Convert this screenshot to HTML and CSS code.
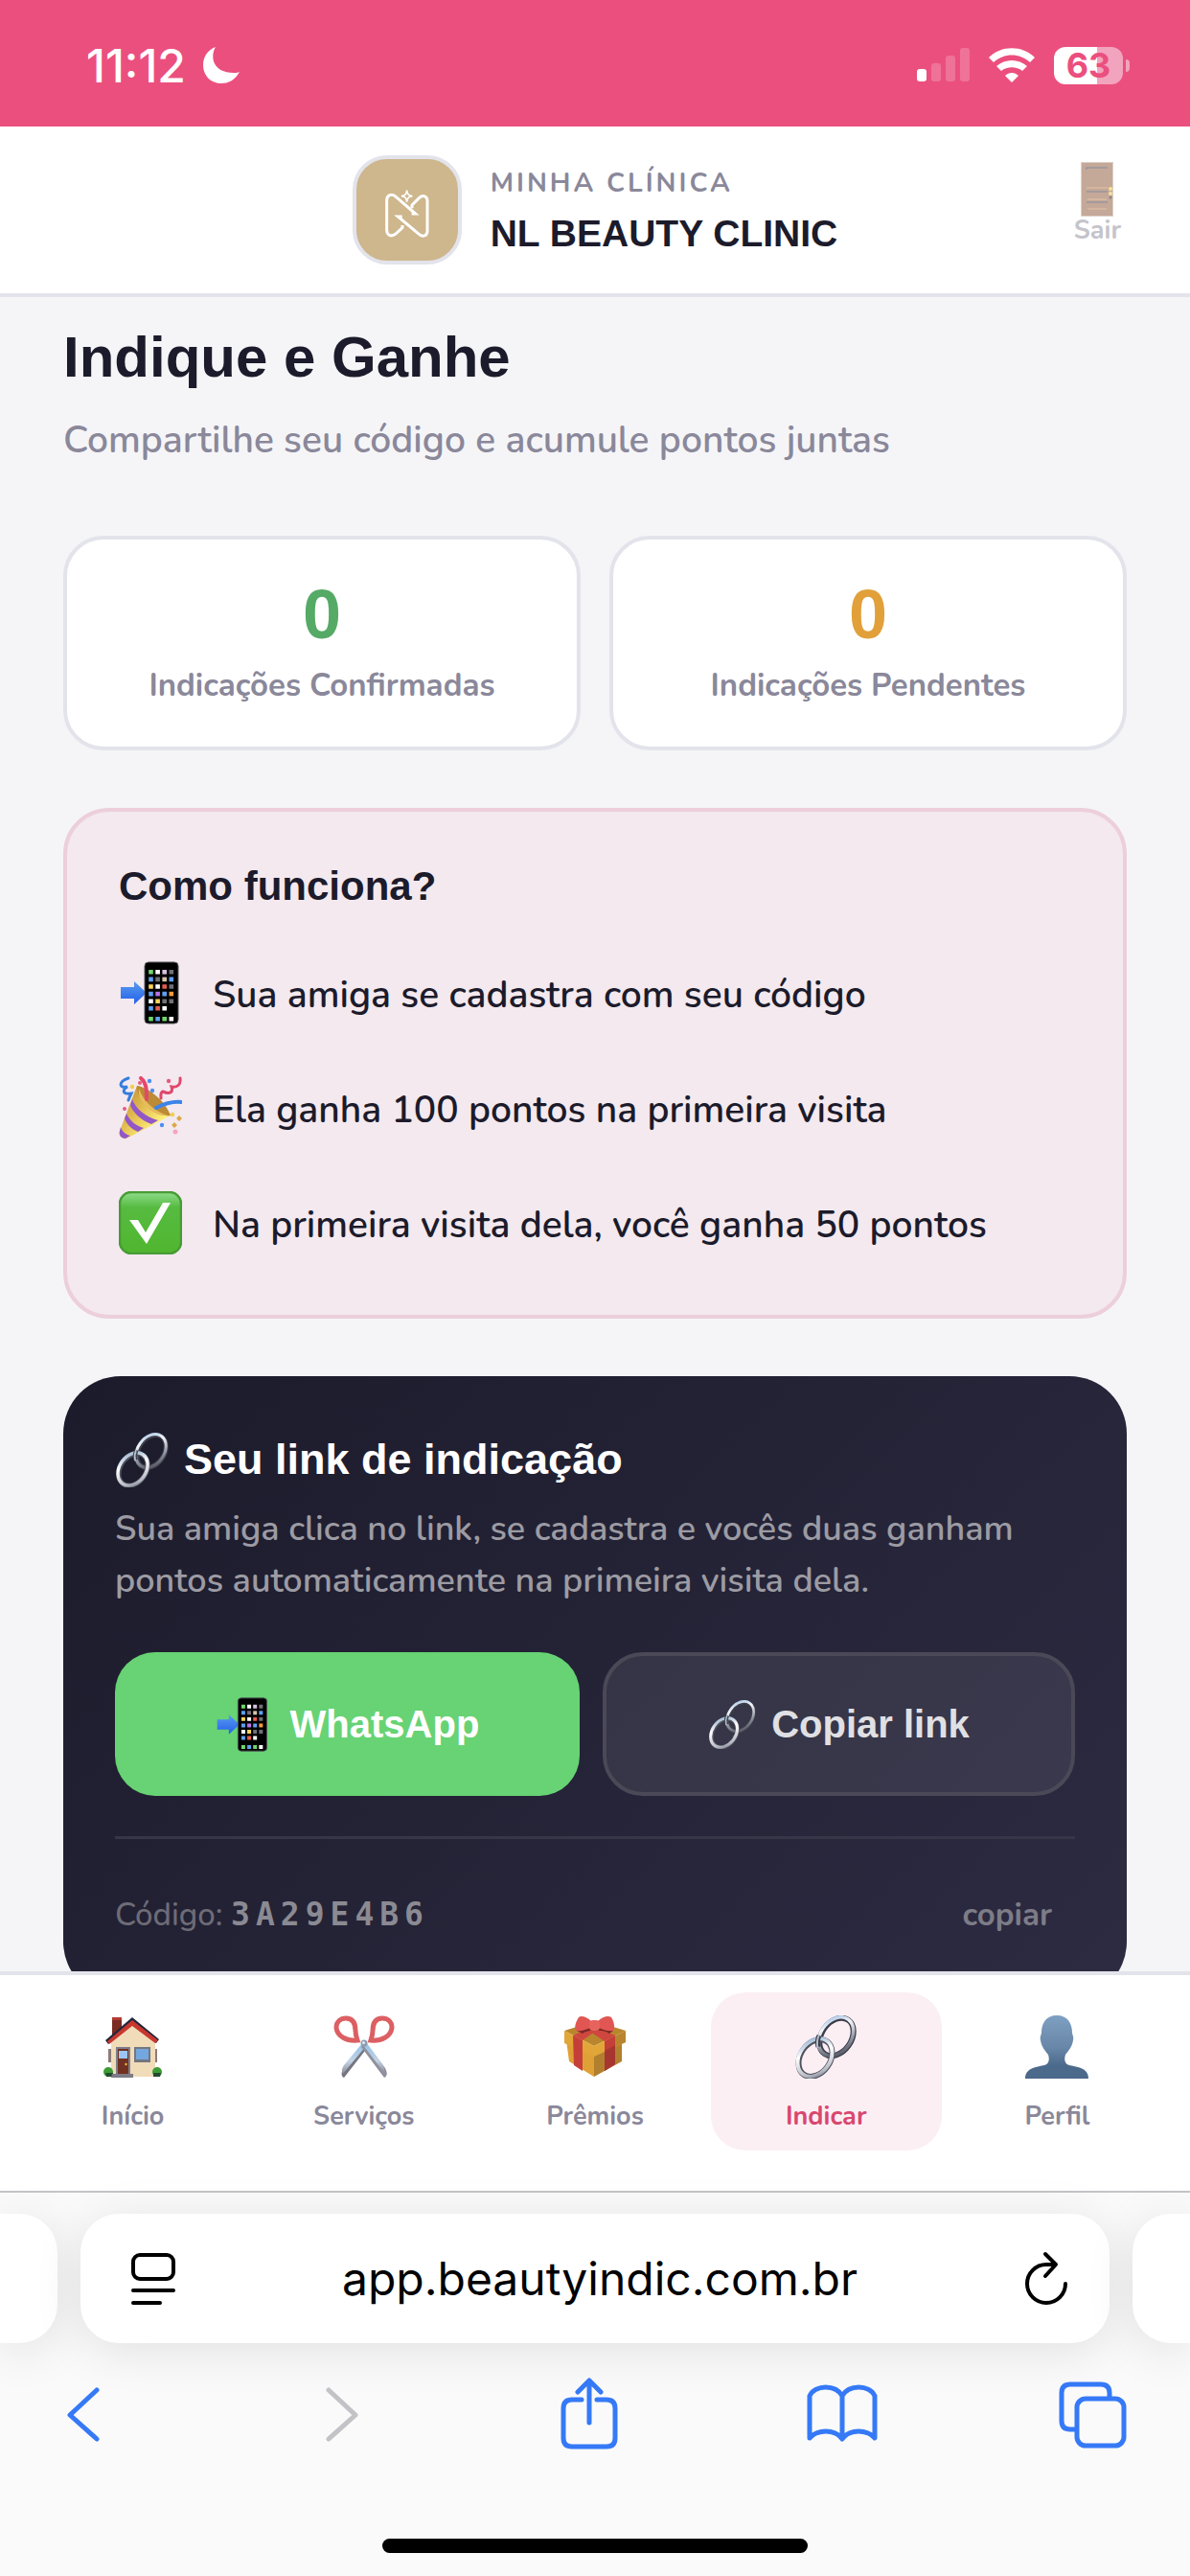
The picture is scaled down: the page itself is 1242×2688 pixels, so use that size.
FILE: index.html
```html
<!DOCTYPE html>
<html lang="pt-BR">
<head>
    <meta charset="UTF-8">
    <meta name="viewport" content="width=device-width, initial-scale=1.0">
    <title>Indique e Ganhe</title>
    <link rel="stylesheet" href="styles.css">
</head>
<body>

<!-- Shared icons -->
<svg class="sprite" aria-hidden="true">
    <defs>
        <linearGradient id="arrowBlue" x1="0" y1="0" x2="0" y2="1">
            <stop offset="0" stop-color="#5a9bf0"/><stop offset="1" stop-color="#2360e8"/>
        </linearGradient>
        <linearGradient id="steel" x1="0" y1="0" x2="1" y2="1">
            <stop offset="0" stop-color="#8fb4dc"/><stop offset="0.3" stop-color="#f4f6fa"/><stop offset="0.65" stop-color="#8d929f"/><stop offset="1" stop-color="#3d3f4a"/>
        </linearGradient>
        <linearGradient id="steelLight" x1="0" y1="0" x2="1" y2="1">
            <stop offset="0" stop-color="#7d9fc4"/><stop offset="0.4" stop-color="#ffffff"/><stop offset="0.8" stop-color="#b8bcc6"/><stop offset="1" stop-color="#5a5d68"/>
        </linearGradient>
        <linearGradient id="cone" x1="0" y1="0" x2="1" y2="1">
            <stop offset="0" stop-color="#b8862f"/><stop offset="0.4" stop-color="#e0b84e"/><stop offset="0.75" stop-color="#fff27a"/><stop offset="1" stop-color="#c79a3c"/>
        </linearGradient>
        <linearGradient id="tick" x1="0" y1="0" x2="0" y2="1">
            <stop offset="0" stop-color="#8fdc8c"/><stop offset="0.25" stop-color="#56bb40"/><stop offset="1" stop-color="#50b62f"/>
        </linearGradient>
        <linearGradient id="bust" x1="0" y1="0" x2="0" y2="1">
            <stop offset="0" stop-color="#7fa0c2"/><stop offset="0.5" stop-color="#6987a8"/><stop offset="0.8" stop-color="#4b698b"/><stop offset="1" stop-color="#4b698b"/>
        </linearGradient>
        <linearGradient id="blade" x1="0" y1="0" x2="0" y2="1">
            <stop offset="0" stop-color="#8ec0ea"/><stop offset="0.6" stop-color="#c3d3e4"/><stop offset="1" stop-color="#8d8e98"/>
        </linearGradient>
    </defs>

    <symbol id="i-phone" viewBox="0 0 66 66">
        <path d="M2 27h14v-6l13 12-13 12v-6H2z" fill="url(#arrowBlue)"/>
        <rect x="27" y="1" width="35" height="64" rx="4" fill="#000" stroke="#55565e" stroke-width="1"/>
        <g stroke-width="4.6" fill="none">
            <path d="M33.500 9v4.600M33.500 58v4.600M47.700 58v4.600" stroke="#6fd66b"/>
            <path d="M40.600 9v4.600M33.500 39.400v4.600M40.600 24.200v4.600M47.700 47v4.600M54.800 58v4.600" stroke="#fff"/>
            <path d="M47.700 9v4.600" stroke="#d9c0e0"/>
            <path d="M33.500 16.600v4.600M54.800 16.600v4.600M33.500 31.800v4.600M47.700 31.800v4.600M33.500 47v4.600M40.600 58v4.600" stroke="#5f9ff2"/>
            <path d="M47.700 16.600v4.600" stroke="#d8c3a8"/>
            <path d="M33.500 24.200v4.600M40.600 39.400v4.600" stroke="#ffd45a"/>
            <path d="M47.700 24.200v4.600M40.600 47v4.600" stroke="#e85b50"/>
            <path d="M40.600 31.800v4.600" stroke="#b873ea"/>
            <path d="M54.800 31.800v4.600" stroke="#f59b3a"/>
            <path d="M54.800 9v4.600M40.600 16.600v4.600M54.800 24.200v4.600M47.700 39.400v4.600M54.800 39.400v4.600" stroke="#6f7078"/>
        </g>
    </symbol>

    <symbol id="i-link" viewBox="0 0 66 66">
        <g fill="none">
            <ellipse cx="44" cy="22.500" rx="15.500" ry="21.500" transform="rotate(35 44 22.500)" stroke="#3c3e49" stroke-width="6"/>
            <ellipse cx="43.500" cy="22" rx="16" ry="22" transform="rotate(35 43.500 22)" stroke="url(#steel)" stroke-width="3.500"/>
            <ellipse cx="22" cy="44.500" rx="15.500" ry="21" transform="rotate(35 22 44.500)" stroke="#50535f" stroke-width="6"/>
            <ellipse cx="21.500" cy="44" rx="16" ry="21.500" transform="rotate(35 21.500 44)" stroke="url(#steelLight)" stroke-width="4"/>
            <path d="M25 33c-1-4-1-8 1-12" stroke="#3c3e49" stroke-width="5"/>
            <path d="M24.500 34c-1-4-1-8 1-13" stroke="#b5bfcd" stroke-width="2"/>
        </g>
    </symbol>

    <symbol id="i-party" viewBox="0 0 66 66">
        <path d="M19 10C30 13 47 26 54 41L8 65c-6 1-9-4-7-8z" fill="url(#cone)"/>
        <path d="M19 10c11 1 30 16 35 31-9 2-21-5-28-14-5-6-8-12-7-17z" fill="#bd8a35"/>
        <path d="M21 13c5 14 16 23 30 28-10 1-19-5-25-12-4-5-6-11-5-16z" fill="#e6bd5c"/>
        <path d="M14 24c3 9 14 19 27 22l-7 4C23 46 14 37 12 30zM8 39c3 7 10 13 18 15l-6 4C13 55 8 50 6 44zM2 53c1 4 5 8 10 9l-5 3c-5 0-7-4-6-8z" fill="#9257c8"/>
        <g fill="none" stroke-width="3.500" stroke-linecap="round">
            <path d="M23 2c6 5 6 12 6 22" stroke="#e6486c" stroke-width="4"/>
            <path d="M65 27c-10-1-18 2-26 6" stroke="#3d84e8" stroke-width="4"/>
            <path d="M10 2C-1 6 0 13 9 11 3 15 4 19 13 18c-1 2-2 4-3 7" stroke="#377ddd" stroke-width="3"/>
            <path d="M64 2c1 7-3 10-9 9 2 6-2 8-9 5-3 1-2 4-2 7" stroke="#e0486c" stroke-width="3"/>
        </g>
        <g fill="#4b8ff0"><circle cx="32" cy="5" r="2.200"/><circle cx="35" cy="15" r="2.200"/><circle cx="45" cy="51" r="2.200"/></g>
        <g fill="#f3cd4c"><circle cx="14" cy="11" r="2.200"/><circle cx="56" cy="40" r="2.200"/><path d="M63 41l3 3-3 3-3-3zM58 48l3 3-3 3-3-3z" fill="#dba748"/></g>
        <g fill="#e75a80"><circle cx="52" cy="5" r="2.200"/><circle cx="6" cy="34" r="2"/><circle cx="22" cy="7" r="2"/><circle cx="59" cy="58" r="2.500" fill="#f4a4c4"/></g>
    </symbol>

    <symbol id="i-check" viewBox="0 0 66 66">
        <rect x="1" y="1" width="64" height="64" rx="12" fill="url(#tick)" stroke="#489b35" stroke-width="2.500"/>
        <path d="M11 30h9l8 13 18-31h8L29 55z" fill="#fff"/>
    </symbol>

    <symbol id="i-house" viewBox="0 0 66 66">
        <g transform="translate(3 0)">
            <path d="M8 2h10v14L8 25z" fill="#7a2c22"/><path d="M8 2h10v3H8z" fill="#b33a31"/>
            <path d="M4 35h3v14H4zM52 35h3v14h-3z" fill="#8c7b78"/>
            <path d="M7 27L29 7l24 21v36H7z" fill="#f0dcb9"/>
            <path d="M29 2L1 26l3 4L29 9l25 20 3-4z" fill="#22263a"/>
            <path d="M29 5L3 27l2 3L29 11l24 18 3-3z" fill="#c8382f"/>
            <circle cx="4" cy="59" r="5" fill="#3c9c35"/><circle cx="55" cy="59" r="5" fill="#3c9c35"/>
            <path d="M1 60h8v4H2zM51 60h8l-1 4h-7z" fill="#244b31"/>
            <path d="M12 33h15v28H12z" fill="#7e7e8a"/><path d="M14 35h11v26H14z" fill="#713122"/>
            <path d="M15 37h9v8h-9z" fill="#9cc6f2"/><circle cx="22.500" cy="51" r="1.200" fill="#f1b94c"/>
            <path d="M31 33h17v16H31z" fill="#74767f"/><path d="M33 35h13v11H33z" fill="#73a7e0"/>
            <path d="M8 61h22v4H7z" fill="#7d7b86"/>
        </g>
    </symbol>

    <symbol id="i-scissors" viewBox="0 0 66 66">
        <path d="M33 28l4 5L12 65c-3-1-3-5-1-9z" fill="#74757f"/>
        <path d="M32 28l3 4L11 61c-2-3-1-6 1-9z" fill="url(#blade)"/>
        <path d="M34 28l-4 5 24 32c4-2 3-6 1-10z" fill="#8f919d"/>
        <path d="M35 28l-3 3 22 29c1-4 0-7-4-12z" fill="url(#blade)"/>
        <g fill="none" stroke="#dc5f63" stroke-width="5">
            <path d="M26 26C15 27 5 22 4 13 4 6 9 3 14 3c9 0 10 8 10 13 0 4 1 7 2 10z"/>
            <path d="M40 26c11 1 21-4 22-13 0-7-5-10-10-10-9 0-10 8-10 13 0 4-1 7-2 10z"/>
        </g>
        <circle cx="33" cy="29" r="3.500" fill="#8d9cb0"/><circle cx="32.500" cy="28.500" r="1.500" fill="#e4ebf3"/>
    </symbol>

    <symbol id="i-gift" viewBox="0 0 66 66">
        <path d="M3 26l29 14v24L6 48z" fill="#dfa136"/><path d="M32 40l29-17v25L32 64z" fill="#b27f2e"/>
        <path d="M1 16L33 6l32 10-33 16z" fill="#b9862e"/>
        <path d="M1 16l31 16v11L1 29zM32 32l33-16v12L32 43z" fill="#e2a638"/><path d="M45 26l20-10v12L45 37z" fill="#b8842f"/>
        <path d="M10 21l10 5v32l-9-6zM43 27l11-6v30l-11 7z" fill="#c53f39"/><path d="M43 37l11-6v20l-11 7z" fill="#a73630"/>
        <path d="M10 21l18-8 9 1-17 12zM43 27L28 17l7-4 19 8z" fill="#cf463f"/>
        <path d="M14 16c8-7 30-7 38 0l-4 3c-8-5-24-4-28 0z" fill="#7b2725"/>
        <path d="M29 6C24 1 18 0 16 2c-3 5-5 10-3 14 5 1 11-1 17-4z" fill="#e15652"/>
        <path d="M36 6c5-5 11-6 14-4 3 5 4 10 2 14-6 1-11-1-17-4z" fill="#e15652"/>
        <rect x="27" y="5" width="11" height="11" rx="4" fill="#e7635e"/>
    </symbol>

    <symbol id="i-person" viewBox="0 0 66 66">
        <path d="M33 0c11 0 16 8 16 18 0 2 2 4 1 8-1 7-5 11-8 15-1 3-1 6 0 8 2 4 7 3 13 5 7 2 11 5 11 12H0c0-7 4-10 11-12 6-2 11-1 13-5 1-2 1-5 0-8-3-4-7-8-8-15-1-4 1-6 1-8C17 8 22 0 33 0z" fill="url(#bust)"/>
    </symbol>
</svg>

<div class="app">

    <div class="status-bar">
        <div class="status-left">
            <span>11:12</span>
            <svg width="38" height="38" viewBox="0 0 38 38"><path d="M13 0C7 10 10 27 32 27c2 0 4 0 6-1C33 35 26 38 19 38 8 38 0 30 0 19 0 10 5 3 13 0z" fill="#fff"/></svg>
        </div>
        <div class="status-right">
            <svg width="55" height="36" viewBox="0 0 55 36" fill="#fff">
                <rect x="0" y="22" width="10" height="13" rx="3"/>
                <g opacity="0.200"><rect x="15" y="16" width="10" height="19" rx="3"/><rect x="30" y="8" width="10" height="27" rx="3"/><rect x="45" y="0" width="10" height="35" rx="3"/></g>
            </svg>
            <svg width="48" height="36" viewBox="0 0 48 36" fill="#fff">
                <path d="M0 10C13-3 35-3 48 10l-5 5C32 5 16 5 5 15z"/>
                <path d="M8 19c9-8 23-8 32 0l-5 5c-6-5-16-5-22 0z"/>
                <path d="M24 36l-7-7c4-4 10-4 14 0z"/>
            </svg>
            <div class="battery"><span>63</span></div>
        </div>
    </div>

    <header class="header">
        <div class="clinic">
            <svg class="clinic-logo" viewBox="0 -9 318 318" fill="none" stroke="#fff" stroke-width="9">
                <path d="M144 198v8l-22 20c-14 10-27 2-27-12v-94c0-17 16-21 26-13l64 55h-12"/>
                <path d="M174 145v-10l22-22c13-12 26-5 26 9v94c0 16-14 20-26 10l-66-55h13"/>
                <path d="M158 89c2 13 5 16 17 18-12 2-15 5-17 18-2-13-5-16-17-18 12-2 15-5 17-18z" stroke-width="5"/>
            </svg>
            <div>
                <div class="clinic-label">MINHA CLÍNICA</div>
                <div class="clinic-name">NL BEAUTY CLINIC</div>
            </div>
        </div>
        <button class="logout" type="button">
            <svg width="34" height="57" viewBox="0 0 34 57">
                <rect x="0.500" y="0.500" width="33" height="56" fill="#c4a898" stroke="#ddd0c9"/>
                <path d="M6 8V6h22M6 31h22M6 42h22" fill="none" stroke="#9b959f" stroke-width="1.500"/>
                <path d="M6 27h22M7 39h20M7 49h20" fill="none" stroke="#d9bba3" stroke-width="1.500"/>
                <circle cx="31" cy="28" r="2" fill="#f6e58f"/><circle cx="31" cy="33" r="2" fill="#f3e2a0"/><circle cx="31" cy="37" r="1.500" fill="#8f8585"/>
            </svg>
            Sair
        </button>
    </header>

    <main class="content">
        <h1>Indique e Ganhe</h1>
        <p class="subtitle">Compartilhe seu código e acumule pontos juntas</p>

        <div class="stats">
            <div class="stat">
                <div class="stat-value green">0</div>
                <div class="stat-label">Indicações Confirmadas</div>
            </div>
            <div class="stat">
                <div class="stat-value orange">0</div>
                <div class="stat-label">Indicações Pendentes</div>
            </div>
        </div>

        <section class="how">
            <h2>Como funciona?</h2>
            <ul>
                <li><svg class="emoji"><use href="#i-phone"/></svg>Sua amiga se cadastra com seu código</li>
                <li><svg class="emoji"><use href="#i-party"/></svg>Ela ganha 100 pontos na primeira visita</li>
                <li><svg class="emoji"><use href="#i-check"/></svg>Na primeira visita dela, você ganha 50 pontos</li>
            </ul>
        </section>

        <section class="share">
            <h2><svg class="emoji-md"><use href="#i-link"/></svg>Seu link de indicação</h2>
            <p>Sua amiga clica no link, se cadastra e vocês duas ganham pontos automaticamente na primeira visita dela.</p>
            <div class="share-buttons">
                <button class="btn-whatsapp" type="button"><svg class="emoji-md"><use href="#i-phone"/></svg>WhatsApp</button>
                <button class="btn-copy" type="button"><svg class="emoji-sm"><use href="#i-link"/></svg>Copiar link</button>
            </div>
            <div class="code-row">
                <span>Código: <strong>3A29E4B6</strong></span>
                <button type="button">copiar</button>
            </div>
        </section>
    </main>

    <nav class="bottom-nav">
        <a href="#inicio"><svg class="emoji"><use href="#i-house"/></svg>Início</a>
        <a href="#servicos"><svg class="emoji"><use href="#i-scissors"/></svg>Serviços</a>
        <a href="#premios"><svg class="emoji"><use href="#i-gift"/></svg>Prêmios</a>
        <a href="#indicar" class="active"><svg class="emoji"><use href="#i-link"/></svg>Indicar</a>
        <a href="#perfil"><svg class="emoji"><use href="#i-person"/></svg>Perfil</a>
    </nav>

    <footer class="browser">
        <div class="tabs">
            <div class="tab-side left"></div>
            <div class="address">
                <button type="button" aria-label="Página">
                    <svg width="46" height="56" viewBox="0 0 46 56" fill="none" stroke="#000" stroke-width="4" stroke-linecap="round"><rect x="2" y="3" width="42" height="25" rx="7"/><path d="M2 40h42M2 53h28"/></svg>
                </button>
                <input type="text" value="app.beautyindic.com.br" aria-label="Endereço">
                <button type="button" aria-label="Recarregar">
                    <svg width="46" height="56" viewBox="0 0 46 56" fill="none" stroke="#000" stroke-width="4" stroke-linecap="round" stroke-linejoin="round"><path d="M43 33a20 20 0 1 1-20-20h9M22 2l11 11-11 12"/></svg>
                </button>
            </div>
            <div class="tab-side right"></div>
        </div>
        <div class="toolbar">
            <button type="button" aria-label="Voltar"><svg viewBox="0 0 72 72"><path d="M51 11L23 37l28 25"/></svg></button>
            <button type="button" aria-label="Avançar" disabled><svg viewBox="0 0 72 72"><path d="M29 11l28 26-28 25"/></svg></button>
            <button type="button" aria-label="Compartilhar"><svg viewBox="0 0 72 72"><path d="M30 21H20q-9 0-9 9v31q0 9 9 9h36q9 0 9-9V30q0-9-9-9H46M38 45V2M26 13L38 1l12 12"/></svg></button>
            <button type="button" aria-label="Favoritos"><svg viewBox="0 0 72 72"><path d="M38 17C31 5 10 5 4 17v44c8-9 26-10 34 1 8-11 26-10 34-1V17C66 5 45 5 38 17zv44"/></svg></button>
            <button type="button" aria-label="Abas"><svg viewBox="0 0 72 72"><path d="M18 52h-5q-9 0-9-9V14q0-9 9-9h32q9 0 9 9v5"/><rect x="20" y="20" width="49" height="49" rx="9"/></svg></button>
        </div>
        <div class="home-bar"></div>
    </footer>

</div>

</body>
</html>
```
FILE: styles.css
```css
* {
    box-sizing: border-box;
}

body {
    margin: 0;
    font-family: Nunito, Lato, sans-serif;
    background-color: #f5f5f8;
    color: #1c1b2b;
}

h1, h2, p, ul {
    margin: 0;
    padding: 0;
}

h1, h2, .clinic-name, .stat-value, .share-buttons button {
    font-family: "Liberation Sans", Arial, sans-serif;
    font-weight: bold;
}

button {
    border: none;
    background: none;
    padding: 0;
    font-family: inherit;
    cursor: pointer;
}

svg {
    display: block;
    flex: none;
    overflow: visible;
}

.sprite {
    position: absolute;
    width: 0;
    height: 0;
}

.emoji {
    width: 66px;
    height: 66px;
}

.emoji-md {
    width: 57px;
    height: 57px;
}

.emoji-sm {
    width: 51px;
    height: 51px;
}

.app {
    display: flex;
    flex-direction: column;
    height: 100vh;
}

/* Status bar */
.status-bar {
    display: flex;
    justify-content: space-between;
    align-items: center;
    height: 132px;
    padding: 4px 70px 0 90px;
    background-color: #eb4f7e;
    color: #fff;
    font-family: Inter, sans-serif;
    flex: none;
}

.status-left, .status-right {
    display: flex;
    align-items: center;
    gap: 18px;
}

.status-left {
    font-size: 48px;
    font-weight: 500;
}

.status-right {
    gap: 20px;
}

.battery {
    position: relative;
    width: 72px;
    height: 39px;
    border-radius: 12px;
    background: linear-gradient(to right, #fff 63%, #f2a3bd 63%);
    color: #eb4f7e;
    font-size: 36px;
    font-weight: 700;
    line-height: 39px;
    text-align: center;
}

.battery::after {
    content: "";
    position: absolute;
    right: -7px;
    top: 13px;
    width: 4px;
    height: 13px;
    border-radius: 0 4px 4px 0;
    background-color: #f2a3bd;
}

/* Header */
.header {
    position: relative;
    display: flex;
    justify-content: center;
    padding: 30px 66px;
    background-color: #fff;
    border-bottom: 4px solid #e3e3eb;
    flex: none;
}

.clinic {
    display: flex;
    align-items: center;
    gap: 30px;
}

.clinic-logo {
    width: 114px;
    height: 114px;
    border: 4px solid #e3e3eb;
    border-radius: 36px;
    background-color: #ceb68d;
}

.clinic-label {
    font-size: 28px;
    font-weight: 700;
    line-height: 48px;
    letter-spacing: 3px;
    color: #8a889a;
}

.clinic-name {
    font-size: 39px;
    line-height: 57px;
}

.logout {
    position: absolute;
    right: 72px;
    top: 37px;
    display: flex;
    flex-direction: column;
    align-items: center;
    color: #c4c4cb;
    font-size: 27px;
    font-weight: 700;
    line-height: 30px;
}

/* Content */
.content {
    flex: 1;
    min-height: 0;
    overflow: hidden;
    padding: 27px 66px 0;
}

h1 {
    font-size: 60px;
    line-height: 72px;
}

.subtitle {
    margin-top: 21px;
    font-size: 39px;
    font-weight: 600;
    line-height: 60px;
    color: #8a889a;
}

.stats {
    display: flex;
    gap: 30px;
    margin-top: 69px;
}

.stat {
    flex: 1;
    padding: 36px 0 39px;
    background-color: #fff;
    border: 4px solid #e3e3eb;
    border-radius: 42px;
    text-align: center;
}

.stat-value {
    font-size: 72px;
    line-height: 84px;
}

.green {
    color: #55aa66;
}

.orange {
    color: #e1a03a;
}

.stat-label {
    margin-top: 9px;
    font-size: 33px;
    font-weight: 700;
    line-height: 48px;
    color: #8a889a;
}

.how {
    margin-top: 60px;
    padding: 51px 54px 63px;
    background-color: #f3e9ef;
    border: 4px solid #eccfda;
    border-radius: 48px;
}

.how h2 {
    font-size: 42px;
    line-height: 54px;
}

.how ul {
    display: flex;
    flex-direction: column;
    gap: 54px;
    margin-top: 51px;
    list-style: none;
}

.how li {
    display: flex;
    align-items: flex-end;
    gap: 32px;
    font-size: 39px;
    font-weight: 600;
    line-height: 60px;
}

.share {
    margin-top: 60px;
    padding: 57px 54px;
    border-radius: 60px;
    background: linear-gradient(135deg, #1c1b2b, #2d2b42);
    color: #fff;
}

.share h2 {
    display: flex;
    align-items: center;
    gap: 15px;
    font-size: 45px;
    line-height: 60px;
}

.share p {
    margin-top: 16px;
    font-size: 36px;
    font-weight: 600;
    line-height: 54px;
    color: #9c9ba3;
}

.share-buttons {
    display: flex;
    gap: 24px;
    margin-top: 47px;
}

.share-buttons button {
    flex: 1 1 0;
    display: flex;
    align-items: center;
    justify-content: center;
    gap: 21px;
    height: 150px;
    border-radius: 42px;
    font-size: 40px;
}

.share-buttons .btn-whatsapp {
    background-color: #67d374;
    color: #fff;
}

.share-buttons .btn-copy {
    gap: 15px;
    border: 4px solid #4b4957;
    background-color: rgba(255, 255, 255, 0.08);
    color: #e0e0e4;
}

.code-row {
    display: flex;
    justify-content: space-between;
    align-items: center;
    margin-top: 42px;
    padding-top: 49px;
    border-top: 3px solid #373648;
    font-size: 33px;
    font-weight: 500;
    line-height: 60px;
    color: #6d6c77;
}

.code-row strong {
    font-family: "DejaVu Sans Mono", monospace;
    letter-spacing: 6px;
    color: #8b8a93;
}

.code-row button {
    padding: 0 24px;
    color: #7d7c87;
    font-size: 33px;
    font-weight: 700;
}

/* Bottom navigation */
.bottom-nav {
    display: flex;
    padding: 18px 18px 42px;
    border-top: 4px solid #e3e3eb;
    background-color: #fff;
    flex: none;
}

.bottom-nav a {
    flex: 1 1 0;
    display: flex;
    flex-direction: column;
    align-items: center;
    gap: 22px;
    padding: 24px 0 17px;
    border-radius: 36px;
    color: #8a889a;
    font-size: 27px;
    font-weight: 700;
    line-height: 36px;
    text-decoration: none;
}

.bottom-nav .active {
    background-color: #fbeff4;
    color: #d9476f;
}

/* Browser bar */
.browser {
    flex: none;
    padding: 22px 0 24px;
    border-top: 2px solid #c3c3c8;
    background-color: #fafafa;
}

.tabs {
    display: flex;
    gap: 24px;
}

.tab-side, .address {
    height: 135px;
    background-color: #fff;
    border-radius: 40px;
    box-shadow: 0 8px 50px rgba(0, 0, 0, 0.1);
}

.tab-side {
    width: 60px;
}

.tab-side.left {
    border-radius: 0 40px 40px 0;
}

.tab-side.right {
    border-radius: 40px 0 0 40px;
}

.address {
    flex: 1;
    display: flex;
    align-items: center;
    padding: 0 43px 0 53px;
}

.address input {
    flex: 1;
    min-width: 0;
    border: none;
    background: none;
    font-family: Inter, sans-serif;
    font-size: 48px;
    text-align: center;
}

.toolbar {
    display: flex;
    justify-content: space-between;
    margin-top: 38px;
    padding: 0 66px 0 50px;
}

.toolbar svg {
    width: 72px;
    height: 72px;
    fill: none;
    stroke: #3579f7;
    stroke-width: 5;
    stroke-linecap: round;
    stroke-linejoin: round;
}

.toolbar button:disabled svg {
    stroke: #c2c2c7;
}

.home-bar {
    width: 444px;
    height: 15px;
    margin: 94px auto 0;
    border-radius: 8px;
    background-color: #000;
}
```
